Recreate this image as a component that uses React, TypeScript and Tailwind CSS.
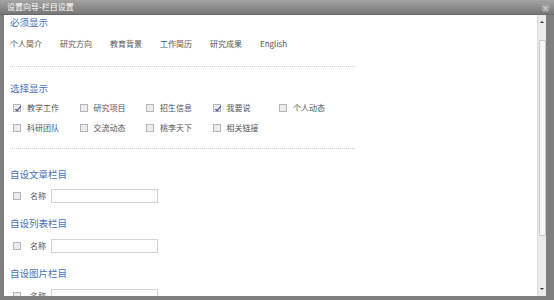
const font = { fontFamily: '"Noto Sans CJK SC", "Liberation Sans", sans-serif' };

const fixedItems = ["个人简介", "研究方向", "教育背景", "工作简历", "研究成果", "English"];

const optionRows = [
  [
    { label: "教学工作", checked: true },
    { label: "研究项目", checked: false },
    { label: "招生信息", checked: false },
    { label: "我要说", checked: true },
    { label: "个人动态", checked: false },
  ],
  [
    { label: "科研团队", checked: false },
    { label: "交流动态", checked: false },
    { label: "桃李天下", checked: false },
    { label: "相关链接", checked: false },
  ],
];

const customSections = ["自设文章栏目", "自设列表栏目", "自设图片栏目"];

const CheckBox = ({ checked }: { checked: boolean }) => {
  return (
    <span className="relative w-[8px] h-[8px] border border-[#b5b5b5] bg-[#ececec] shrink-0">
      {checked && (
        <svg viewBox="0 0 8 8" className="absolute left-0 top-0 w-[8px] h-[8px]">
          <path d="M1.5 4 L3.2 5.8 L6.8 1.2" fill="none" stroke="#4a4f8c" strokeWidth="1.2" />
        </svg>
      )}
    </span>
  );
};

const SectionTitle = ({ text, className }: { text: string; className?: string }) => {
  return <div className={`h-[14px] leading-[14px] text-[9.5px] text-[#4672b8] ${className ?? ""}`}>{text}</div>;
};

const Divider = ({ className }: { className?: string }) => {
  return <div className={`w-[345px] border-t border-dotted border-[#cfcfcf] ${className ?? ""}`} />;
};

const NameRow = ({ className }: { className?: string }) => {
  return (
    <div className={`flex items-center h-[14px] pl-[3px] ${className ?? ""}`}>
      <CheckBox checked={false} />
      <span className="ml-[9px] text-[8px] text-[#555]">名称</span>
      <span className="ml-[5px] w-[107px] h-[14px] border border-[#d2d2d2] bg-white" />
    </div>
  );
};

const ScrollBar = () => {
  return (
    <div className="w-[9px] bg-[#ebebeb] border-l border-[#dcdcdc] flex flex-col items-center">
      <div className="h-[14px] flex items-center justify-center">
        <span className="w-0 h-0 border-l-[2px] border-r-[2px] border-b-[2px] border-l-transparent border-r-transparent border-b-[#333]" />
      </div>
      <div className="mt-[11px] w-[7px] h-[196px] bg-[#f7f7f7] border border-[#c9c9c9] rounded-[1px]" />
      <div className="flex-1" />
      <div className="h-[14px] flex items-center justify-center">
        <span className="w-0 h-0 border-l-[2px] border-r-[2px] border-t-[2px] border-l-transparent border-r-transparent border-t-[#333]" />
      </div>
    </div>
  );
};

const App = () => {
  return (
    <div className="w-[554px] h-[300px] flex flex-col bg-[#7f7f7f] overflow-hidden" style={font}>
      <div className="h-[15px] flex items-center justify-between pl-[7px] pr-[4px] bg-gradient-to-b from-[#a4a4a4] to-[#767676] border-b border-[#6a6a6a]">
        <span className="text-[8px] leading-none text-white">设置向导-栏目设置</span>
        <span className="w-[9px] h-[9px] rounded-full bg-[#9c9c9c] text-[8px] leading-[9px] text-center text-[#e8e8e8]">×</span>
      </div>
      <div className="flex-1 flex pl-[4px] pr-[8px] pb-[4px] min-h-0">
        <div className="flex-1 bg-white overflow-hidden pl-[6px]">
          <SectionTitle text="必须显示" />
          <div className="flex mt-[8px] h-[14px] items-center text-[8px] text-[#555]">
            {fixedItems.map((item) => (
              <span key={item} className="w-[50px]">{item}</span>
            ))}
          </div>
          <Divider className="mt-[15px]" />

          <SectionTitle text="选择显示" className="mt-[14px]" />
          {optionRows.map((row, i) => (
            <div key={i} className="flex mt-[6px] h-[14px] items-center pl-[3px]">
              {row.map((opt) => (
                <div key={opt.label} className="w-[66.5px] flex items-center">
                  <CheckBox checked={opt.checked} />
                  <span className="ml-[6px] text-[8px] text-[#555]">{opt.label}</span>
                </div>
              ))}
            </div>
          ))}
          <Divider className="mt-[13px]" />

          <SectionTitle text={customSections[0]} className="mt-[18px]" />
          <NameRow className="mt-[8px]" />
          <SectionTitle text={customSections[1]} className="mt-[13px]" />
          <NameRow className="mt-[9px]" />
          <SectionTitle text={customSections[2]} className="mt-[13px]" />
          <NameRow className="mt-[9px]" />
        </div>
        <ScrollBar />
      </div>
    </div>
  );
};

export default App;
